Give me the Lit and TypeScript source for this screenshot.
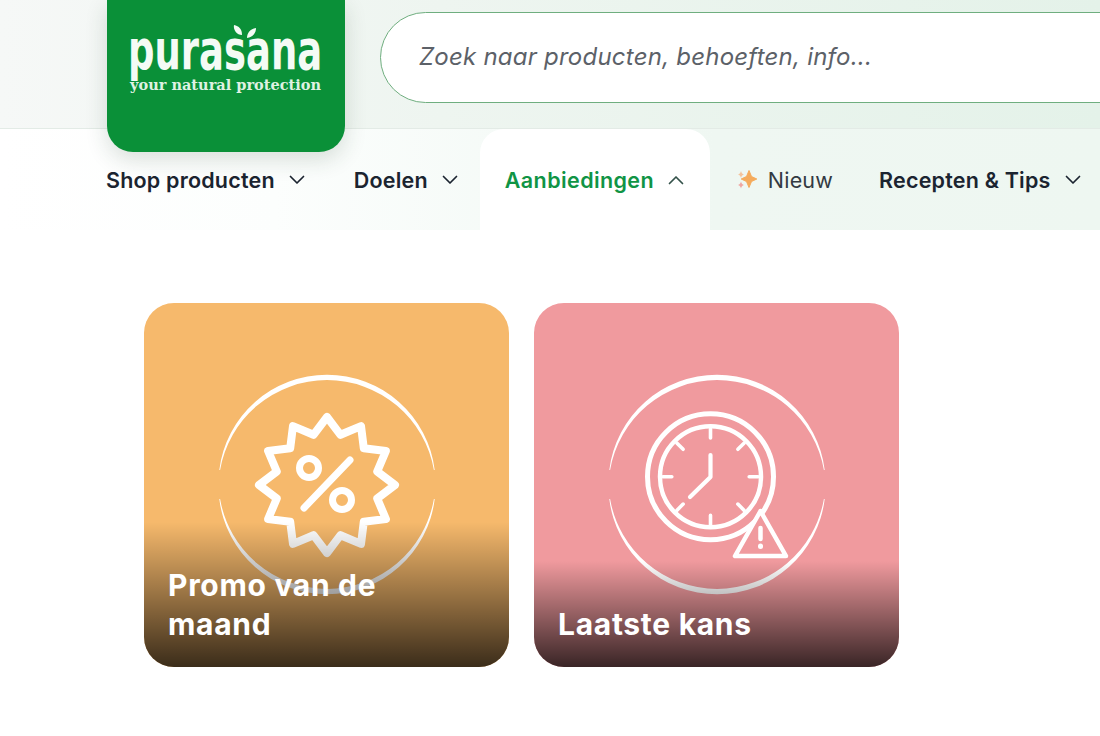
import { LitElement, html, css, svg } from "lit";
import { customElement } from "lit/decorators.js";

const chevron = (up = false) => html`<svg class="chev" viewBox="0 0 16 10" width="16" height="10" fill="none" stroke="currentColor" stroke-width="1.7" stroke-linecap="round" stroke-linejoin="round"><path d=${up ? "M1.5 8.5 8 2l6.5 6.5" : "M1.5 1.5 8 8l6.5-6.5"}></path></svg>`;

const ring = svg`
  <path d="M2.3 95A108.5 108.5 0 0 1 217.7 95L216.9 95A108.5 108.5 0 0 0 3.1 95Z" fill="#fff" stroke="none"/>
  <path d="M2.3 124A108.5 108.5 0 0 0 217.7 124L216.9 124A108.5 108.5 0 0 1 3.1 124Z" fill="#fff" stroke="none"/>`;

function starPoints(): string {
  const pts: string[] = [];
  for (let i = 0; i < 24; i++) {
    const r = i % 2 === 0 ? 68 : 52;
    const a = (i * Math.PI) / 12 - Math.PI / 2;
    pts.push(`${(110 + r * Math.cos(a)).toFixed(1)},${(110 + r * Math.sin(a)).toFixed(1)}`);
  }
  return pts.join(" ");
}

const promoIcon = html`<svg class="icon" viewBox="0 0 220 220" width="220" height="220" fill="none" stroke="#fff" stroke-linecap="round" stroke-linejoin="round">
  ${ring}
  <polygon points=${starPoints()} stroke-width="8"></polygon>
  <circle cx="92" cy="93" r="9.500" stroke-width="7"></circle>
  <circle cx="125" cy="125" r="9.500" stroke-width="7"></circle>
  <path d="M133 85 87 133" stroke-width="7"></path>
</svg>`;

const ticks = [0, 45, 90, 135, 180, 225, 270, 315];
const clockIcon = html`<svg class="icon" viewBox="0 0 220 220" width="220" height="220" fill="none" stroke="#fff" stroke-linecap="round" stroke-linejoin="round">
  ${ring}
  <circle cx="103.5" cy="101.7" r="63" stroke-width="5"></circle>
  <circle cx="103.5" cy="101.7" r="50.5" stroke-width="4.500"></circle>
  ${ticks.map((t) => svg`<path d="M103.5 54v9" stroke-width="3.600" transform="rotate(${t} 103.5 101.7)"></path>`)}
  <path d="M103.5 80v22L83 122" stroke-width="4.200"></path>
  <path d="M153.5 136 128 181h51Z" fill="#f09a9e" stroke-width="4.500"></path>
  <path d="M153.5 153v11" stroke-width="4.500"></path>
  <path d="M153.5 171v.6" stroke-width="5"></path>
</svg>`;

@customElement("app-root")
export class AppRoot extends LitElement {
  static styles = css`
    :host { display: block; position: relative; width: 1100px; height: 736px; overflow: hidden; background: #fff; font-family: Inter, "Noto Sans", sans-serif; color: #1b2430; }
    .top { height: 129px; box-sizing: border-box; padding: 12px 0 0 380px; display: flex; background: linear-gradient(90deg, #f6f8f7 0%, #eef5f0 40%, #e4f2e9 100%); border-bottom: 1px solid #e3ebe6; }
    .search { flex: 0 0 780px; height: 91px; box-sizing: border-box; border: 1px solid #6fae7f; border-radius: 46px; background: #fff; display: flex; align-items: center; padding: 0 0 2px 38px; font-style: italic; font-size: 24px; letter-spacing: .23px; color: #5c6168; }
    .logo { position: absolute; left: 107px; top: 0; width: 238px; height: 152px; border-radius: 0 0 26px 26px; background: #0a9038; box-shadow: 0 8px 22px rgba(30,60,40,.16); color: #fff; overflow: hidden; }
    .word { position: absolute; left: 21px; top: 25px; font-family: "DejaVu Sans", sans-serif; font-weight: 700; font-size: 56px; line-height: 50px; transform-origin: 0 0; transform: scaleX(.66); white-space: nowrap; color: #f4fbf5; }
    .leaves { position: absolute; left: 125px; top: 24px; }
    .tag { position: absolute; left: 23px; top: 76px; font-family: "DejaVu Serif", serif; font-weight: 700; font-size: 15.5px; line-height: 18px; transform-origin: 0 0; transform: scaleX(.937); white-space: nowrap; color: #dff2e2; }
    nav { height: 101px; padding-left: 106px; display: flex; align-items: stretch; background: linear-gradient(90deg, #fff 0%, #fcfefd 25%, #eff7f2 65%, #eef7f1 100%); font-size: 21.5px; font-weight: 600; letter-spacing: .2px; }
    .item { display: flex; align-items: center; gap: 14px; white-space: nowrap; }
    .shop { margin-right: 49px; }
    .goals { margin-right: 22px; }
    .active { width: 230px; box-sizing: border-box; padding-left: 25px; background: #fff; border-radius: 24px 24px 0 0; color: #109445; margin-right: 26px; letter-spacing: .4px; }
    .active .chev { color: #34524a; }
    .new { font-weight: 400; gap: 11px; color: #333a42; margin-right: 46px; }
    .chev { flex: none; color: #1b2430; }
    .cards { display: flex; gap: 25px; padding: 73px 0 0 144px; }
    .card { position: relative; flex: 0 0 365px; height: 364px; border-radius: 30px; overflow: hidden; display: flex; align-items: center; justify-content: center; }
    .orange { background: #f6b96c; }
    .pink { background: #f09a9e; }
    .label { position: absolute; left: 0; right: 0; bottom: 0; padding: 44px 24px 23px; background: linear-gradient(180deg, rgba(0,0,0,0) 0%, rgba(0,0,0,.76) 100%); color: #fff; font-size: 30px; line-height: 39px; font-weight: 700; letter-spacing: .7px; }
    .icon { display: block; overflow: visible; }
  `;

  render() {
    return html`
      <div class="top"><div class="search">Zoek naar producten, behoeften, info...</div></div>
      <div class="logo">
        <div class="word">purasana</div>
        <svg class="leaves" width="26" height="16" viewBox="0 0 26 16" fill="#f4fbf5"><path d="M2 1c5 1 8 4 8 10C5 11 1 6 2 1Z"></path><path d="M24 4c0 5-3 9-9 10 0-5 3-9 9-10Z"></path></svg>
        <div class="tag">your natural protection</div>
      </div>
      <nav>
        <div class="item shop">Shop producten ${chevron()}</div>
        <div class="item goals">Doelen ${chevron()}</div>
        <div class="item active">Aanbiedingen ${chevron(true)}</div>
        <div class="item new">
          <svg width="21" height="21" viewBox="0 0 21 21"><path d="M13 1.500 15.500 7.500 20.800 10 15.500 12.500 13 18.500 10.500 12.500 5.200 10 10.500 7.500Z" fill="#f5ab5c" stroke="#f5ab5c" stroke-linejoin="round"></path><path d="M5 2c.5 2 1.200 3 3 3.500-1.800.5-2.500 1.500-3 3.500-.5-2-1.200-3-3-3.500 1.800-.5 2.500-1.500 3-3.500Z" fill="#f4c39c"></path><path d="M5 12.500c.5 2 1.200 3 3 3.500-1.800.5-2.500 1.500-3 3.500-.5-2-1.200-3-3-3.500 1.800-.5 2.500-1.500 3-3.500Z" fill="#efa6a0"></path></svg>
          Nieuw
        </div>
        <div class="item">Recepten &amp; Tips ${chevron()}</div>
      </nav>
      <div class="cards">
        <div class="card orange">${promoIcon}<div class="label">Promo van de<br />maand</div></div>
        <div class="card pink">${clockIcon}<div class="label">Laatste kans</div></div>
      </div>
    `;
  }
}
